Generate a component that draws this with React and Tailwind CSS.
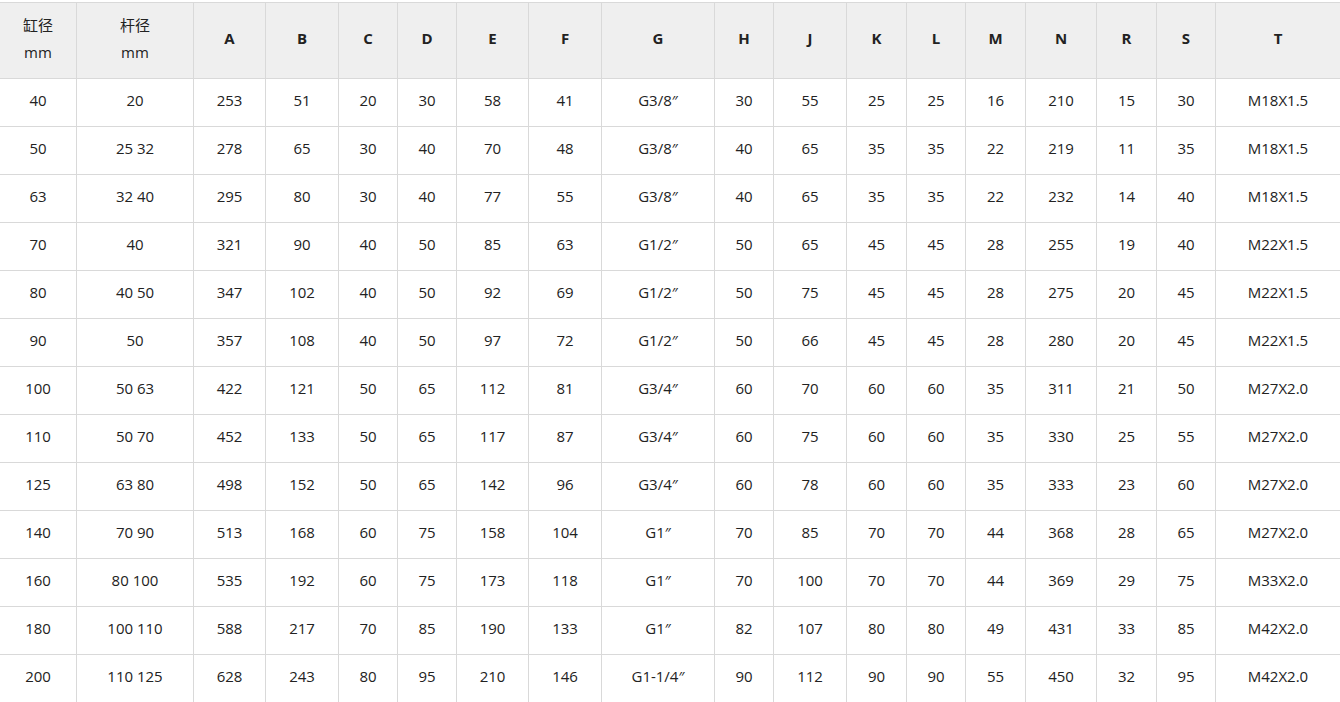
import React from 'react';

const cols = [
  'w-[76px]', 'w-[116px]', 'w-[71px]', 'w-[72px]', 'w-[58px]', 'w-[58px]', 'w-[71px]', 'w-[72px]', 'w-[112px]',
  'w-[58px]', 'w-[72px]', 'w-[59px]', 'w-[58px]', 'w-[59px]', 'w-[70px]', 'w-[59px]', 'w-[58px]', 'w-[124px]',
];

const heads = ['A', 'B', 'C', 'D', 'E', 'F', 'G', 'H', 'J', 'K', 'L', 'M', 'N', 'R', 'S', 'T'];

const rows = [
  ['40', '20', '253', '51', '20', '30', '58', '41', 'G3/8″', '30', '55', '25', '25', '16', '210', '15', '30', 'M18X1.5'],
  ['50', '25 32', '278', '65', '30', '40', '70', '48', 'G3/8″', '40', '65', '35', '35', '22', '219', '11', '35', 'M18X1.5'],
  ['63', '32 40', '295', '80', '30', '40', '77', '55', 'G3/8″', '40', '65', '35', '35', '22', '232', '14', '40', 'M18X1.5'],
  ['70', '40', '321', '90', '40', '50', '85', '63', 'G1/2″', '50', '65', '45', '45', '28', '255', '19', '40', 'M22X1.5'],
  ['80', '40 50', '347', '102', '40', '50', '92', '69', 'G1/2″', '50', '75', '45', '45', '28', '275', '20', '45', 'M22X1.5'],
  ['90', '50', '357', '108', '40', '50', '97', '72', 'G1/2″', '50', '66', '45', '45', '28', '280', '20', '45', 'M22X1.5'],
  ['100', '50 63', '422', '121', '50', '65', '112', '81', 'G3/4″', '60', '70', '60', '60', '35', '311', '21', '50', 'M27X2.0'],
  ['110', '50 70', '452', '133', '50', '65', '117', '87', 'G3/4″', '60', '75', '60', '60', '35', '330', '25', '55', 'M27X2.0'],
  ['125', '63 80', '498', '152', '50', '65', '142', '96', 'G3/4″', '60', '78', '60', '60', '35', '333', '23', '60', 'M27X2.0'],
  ['140', '70 90', '513', '168', '60', '75', '158', '104', 'G1″', '70', '85', '70', '70', '44', '368', '28', '65', 'M27X2.0'],
  ['160', '80 100', '535', '192', '60', '75', '173', '118', 'G1″', '70', '100', '70', '70', '44', '369', '29', '75', 'M33X2.0'],
  ['180', '100 110', '588', '217', '70', '85', '190', '133', 'G1″', '82', '107', '80', '80', '49', '431', '33', '85', 'M42X2.0'],
  ['200', '110 125', '628', '243', '80', '95', '210', '146', 'G1-1/4″', '90', '112', '90', '90', '55', '450', '32', '95', 'M42X2.0'],
];

const HeadCell = ({ w, children }) => (
  <div className={`${w} h-[75px] shrink-0 bg-[#efefef] flex flex-col items-center justify-center pb-[4px] text-[15px] text-[#222]`}>
    {children}
  </div>
);

export default function App() {
  return (
    <div className="w-[1340px] h-[702px] overflow-hidden bg-white" style={{ fontFamily: '"Open Sans", "Noto Sans CJK SC", sans-serif' }}>
      <div className="mt-[2px] pt-px bg-[#d9d9d9] flex flex-col gap-px">
        <div className="flex gap-px">
          <HeadCell w={cols[0]}>
            <span className="leading-[27px]">缸径</span>
            <span className="leading-[27px]">mm</span>
          </HeadCell>
          <HeadCell w={cols[1]}>
            <span className="leading-[27px]">杆径</span>
            <span className="leading-[27px]">mm</span>
          </HeadCell>
          {heads.map((h, i) => (
            <HeadCell key={h} w={cols[i + 2]}>
              <span className="font-bold">{h}</span>
            </HeadCell>
          ))}
        </div>
        {rows.map((r, ri) => (
          <div key={ri} className="flex gap-px">
            {r.map((v, ci) => (
              <div key={ci} className={`${cols[ci]} h-[47px] shrink-0 bg-white flex items-center justify-center pb-[4px] text-[15px] text-[#222]`}>
                {v}
              </div>
            ))}
          </div>
        ))}
      </div>
    </div>
  );
}
